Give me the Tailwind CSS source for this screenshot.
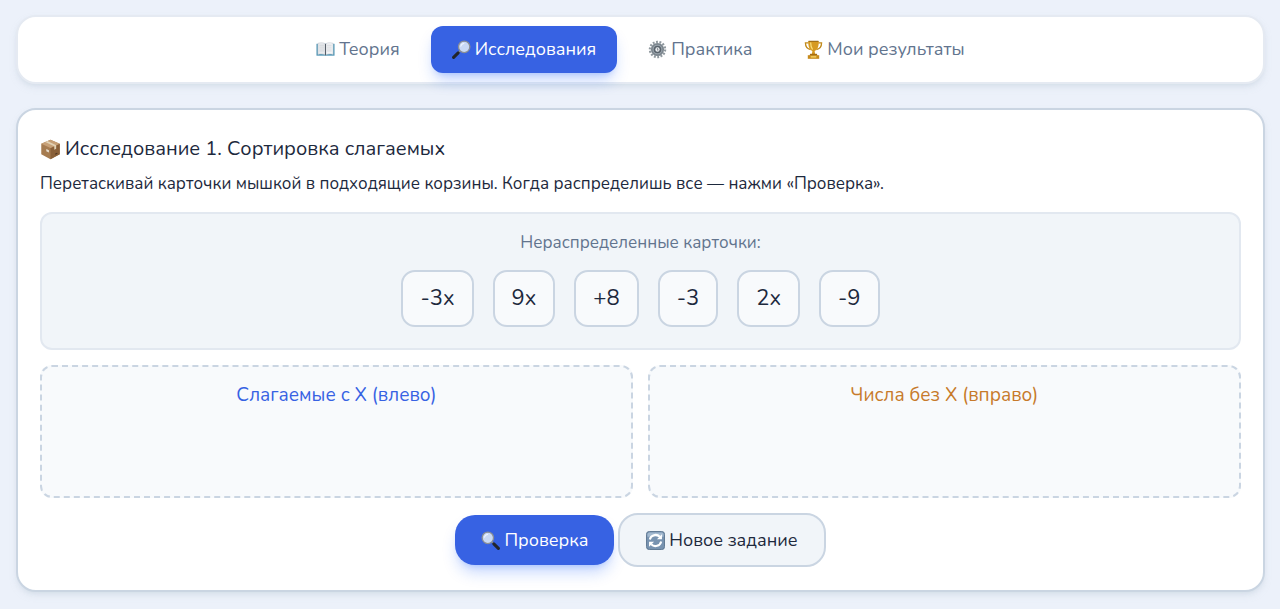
<!DOCTYPE html>
<html lang="ru">

<head>
  <meta charset="UTF-8">
  <meta name="viewport" content="width=device-width, initial-scale=1.0">
  <title>Исследования</title>
  <script src="https://cdn.jsdelivr.net/npm/@tailwindcss/browser@4"></script>
</head>

<body class="bg-[#ecf1fa] font-['Nunito','Lato',sans-serif] text-slate-800">
  <div class="pl-4 pr-[15px] pt-[15px] pb-[18px]">
    <nav class="flex flex-wrap justify-center gap-[10px] rounded-[20px] border-2 border-[#e5eaf2] bg-white px-2 py-[9px] shadow-md shadow-slate-300/50 mb-6">
      <button class="flex items-center gap-1 rounded-xl px-[21px] py-[10px] text-[18px] leading-[27px] text-slate-500">
        <svg class="size-[19px]" viewBox="0 0 20 20">
          <path d="M.5 4h19v12.500H.5z" fill="#4d95b5" />
          <path d="M2 3.500c3-1 6-.8 8 .6v11.700c-2-1.200-5-1.400-8-.6z" fill="#e9ebee" stroke="#b8bec6" stroke-width=".5" />
          <path d="M18 3.500c-3-1-6-.8-8 .6v11.700c2-1.200 5-1.400 8-.6z" fill="#f3f4f6" stroke="#b8bec6" stroke-width=".5" />
          <path d="M10 4.100v12" stroke="#555e68" stroke-width="1.200" />
          <path d="M3.500 5.500h5M3.500 7.500h5M3.500 9.500h5M3.500 11.500h5M11.500 5.500h5M11.500 7.500h5M11.500 9.500h5M11.500 11.500h5" stroke="#c3c8ce" stroke-width=".6" />
        </svg>
        Теория
      </button>
      <button class="flex items-center gap-1 rounded-xl bg-[#3762e3] px-[21px] py-[10px] text-[18px] leading-[27px] text-white shadow-lg shadow-blue-600/25">
        <svg class="size-[19px]" viewBox="0 0 20 20">
          <path d="M8.300 11.700 5.800 14.200" stroke="#8c939c" stroke-width="1.800" />
          <path d="m6.500 13.500-4.800 4.800" stroke="#22252b" stroke-width="3.200" stroke-linecap="round" />
          <circle cx="12.800" cy="7.200" r="6" fill="#c9d9f5" stroke="#8b8f96" stroke-width="1.400" />
          <path d="M9.300 6.500a3.800 3.800 0 0 1 3.200-3" fill="none" stroke="#eff5ff" stroke-width="1.200" stroke-linecap="round" />
        </svg>
        Исследования
      </button>
      <button class="flex items-center gap-1 rounded-xl px-[21px] py-[10px] text-[18px] leading-[27px] text-slate-500">
        <svg class="size-[19px]" viewBox="0 0 20 20">
          <circle cx="10" cy="10" r="8" fill="none" stroke="#90999f" stroke-width="2.400" stroke-dasharray="2 1.590" />
          <circle cx="10" cy="10" r="6" fill="#9ba5ad" stroke="#7c868e" stroke-width="1.800" />
          <circle cx="10" cy="10" r="4" fill="#59636c" />
          <circle cx="10" cy="10" r="2.300" fill="#eef1f3" />
          <path d="M9.300 9.200h1v2" fill="none" stroke="#4b5560" stroke-width=".8" />
        </svg>
        Практика
      </button>
      <button class="flex items-center gap-1 rounded-xl px-[21px] py-[10px] text-[18px] leading-[27px] text-slate-500">
        <svg class="size-[19px]" viewBox="0 0 20 20">
          <path d="M5 3H1.500c0 4 1.800 6.500 5.500 7M15 3h3.500c0 4-1.800 6.500-5.500 7" fill="none" stroke="#c18a1c" stroke-width="1.400" />
          <path d="M4.500 1h11c.3 6-1.500 9.500-4.300 10.500l.5 3.500H8.300l.5-3.500C6 10.500 4.200 7 4.500 1z" fill="#d69a22" />
          <path d="M7 2.500c0 3 .5 5.500 2 7.500" fill="none" stroke="#fbe07c" stroke-width="1.300" />
          <path d="M4.800 1.300h10.400" stroke="#865a10" stroke-width=".9" />
          <path d="M6.500 14.500h7l.7 2H5.800z" fill="#a56d12" />
          <path d="M4 16h12v3.800H4z" fill="#c78a1b" />
          <path d="M7 17h6v1.500H7z" fill="#f6d565" />
        </svg>
        Мои результаты
      </button>
    </nav>

    <main class="rounded-[20px] border-2 border-slate-300 bg-white px-[22px] py-[23px] shadow-md shadow-slate-300/50">
      <h1 class="flex items-center gap-1 text-[20px] leading-[32px]">
        <svg class="size-[21px]" viewBox="0 0 20 20">
          <path d="m10 .8 8.800 3.700v10L10 19.300 1.200 14.500v-10z" fill="#a67c50" />
          <path d="M10 8.500v10.800l8.800-4.800v-10z" fill="#8a6038" />
          <path d="m10 .8 8.800 3.700L10 8.500 1.200 4.500z" fill="#c7a076" />
          <path d="m5 2.900 8.600 4v3.400l1.800-.9V6L7 2z" fill="#e2d2b5" />
          <path d="m6 9.500 2.500 1.200v2.200L6 11.600z" fill="#e8e0d2" />
          <path d="m14.500 14.500 2-1" stroke="#4c3420" />
        </svg>
        Исследование 1. Сортировка слагаемых
      </h1>
      <p class="mt-[6px] text-[17px] leading-[26px]">Перетаскивай карточки мышкой в подходящие корзины. Когда распределишь все — нажми «Проверка».</p>

      <section class="mt-[15px] rounded-xl border-2 border-slate-200 bg-slate-100 px-4 pt-4 pb-[21px]">
        <h2 class="text-center text-[17px] leading-[26px] text-slate-500">Нераспределенные карточки:</h2>
        <div class="mt-[14px] flex flex-wrap justify-center gap-[19px]">
          <div draggable="true" class="cursor-grab rounded-[14px] border-2 border-slate-300 bg-slate-50 px-[17px] py-3 text-[22px] leading-[29px]">-3x</div>
          <div draggable="true" class="cursor-grab rounded-[14px] border-2 border-slate-300 bg-slate-50 px-[17px] py-3 text-[22px] leading-[29px]">9x</div>
          <div draggable="true" class="cursor-grab rounded-[14px] border-2 border-slate-300 bg-slate-50 px-[17px] py-3 text-[22px] leading-[29px]">+8</div>
          <div draggable="true" class="cursor-grab rounded-[14px] border-2 border-slate-300 bg-slate-50 px-[17px] py-3 text-[22px] leading-[29px]">-3</div>
          <div draggable="true" class="cursor-grab rounded-[14px] border-2 border-slate-300 bg-slate-50 px-[17px] py-3 text-[22px] leading-[29px]">2x</div>
          <div draggable="true" class="cursor-grab rounded-[14px] border-2 border-slate-300 bg-slate-50 px-[17px] py-3 text-[22px] leading-[29px]">-9</div>
        </div>
      </section>

      <div class="mt-[15px] grid grid-cols-2 gap-[15px]">
        <section class="min-h-[133px] rounded-xl border-2 border-dashed border-slate-300 bg-slate-50 p-[14px]">
          <h2 class="text-center text-[19px] leading-[28px] text-[#3762e3]">Слагаемые с X (влево)</h2>
        </section>
        <section class="min-h-[133px] rounded-xl border-2 border-dashed border-slate-300 bg-slate-50 p-[14px]">
          <h2 class="text-center text-[19px] leading-[28px] text-[#c77a2b]">Числа без X (вправо)</h2>
        </section>
      </div>

      <div class="mt-[15px] flex items-center justify-center gap-1">
        <button class="flex items-center gap-1 rounded-[20px] bg-[#3762e3] px-[26px] py-3 text-[18px] leading-[26px] text-white shadow-lg shadow-blue-600/25">
          <svg class="size-[19px]" viewBox="0 0 20 20">
            <path d="m11.700 11.700 2.500 2.500" stroke="#8c939c" stroke-width="1.800" />
            <path d="m13.500 13.500 4.800 4.800" stroke="#22252b" stroke-width="3.200" stroke-linecap="round" />
            <circle cx="7.200" cy="7.200" r="6" fill="#c9d9f5" stroke="#8b8f96" stroke-width="1.400" />
            <path d="M3.700 6.500a3.800 3.800 0 0 1 3.200-3" fill="none" stroke="#eff5ff" stroke-width="1.200" stroke-linecap="round" />
          </svg>
          Проверка
        </button>
        <button class="flex items-center gap-1 rounded-[20px] border-2 border-slate-300 bg-slate-100 px-[26px] py-3 text-[18px] leading-[26px]">
          <svg class="size-[19px]" viewBox="0 0 20 20">
            <rect x=".5" y=".5" width="19" height="19" rx="3" fill="#7893b0" stroke="#5d7690" />
            <path d="M1.500 3.500a2 2 0 0 1 2-2h13a2 2 0 0 1 2 2V6h-17z" fill="#a3b9cf" />
            <path d="M4 9a6.200 6.200 0 0 1 10.500-3M16 11a6.200 6.200 0 0 1-10.500 3" fill="none" stroke="#fff" stroke-width="2.200" />
            <path d="M16.800 3.500v5.300h-5.300zM3.200 16.500v-5.300h5.300z" fill="#fff" />
          </svg>
          Новое задание
        </button>
      </div>
    </main>
  </div>
</body>

</html>
